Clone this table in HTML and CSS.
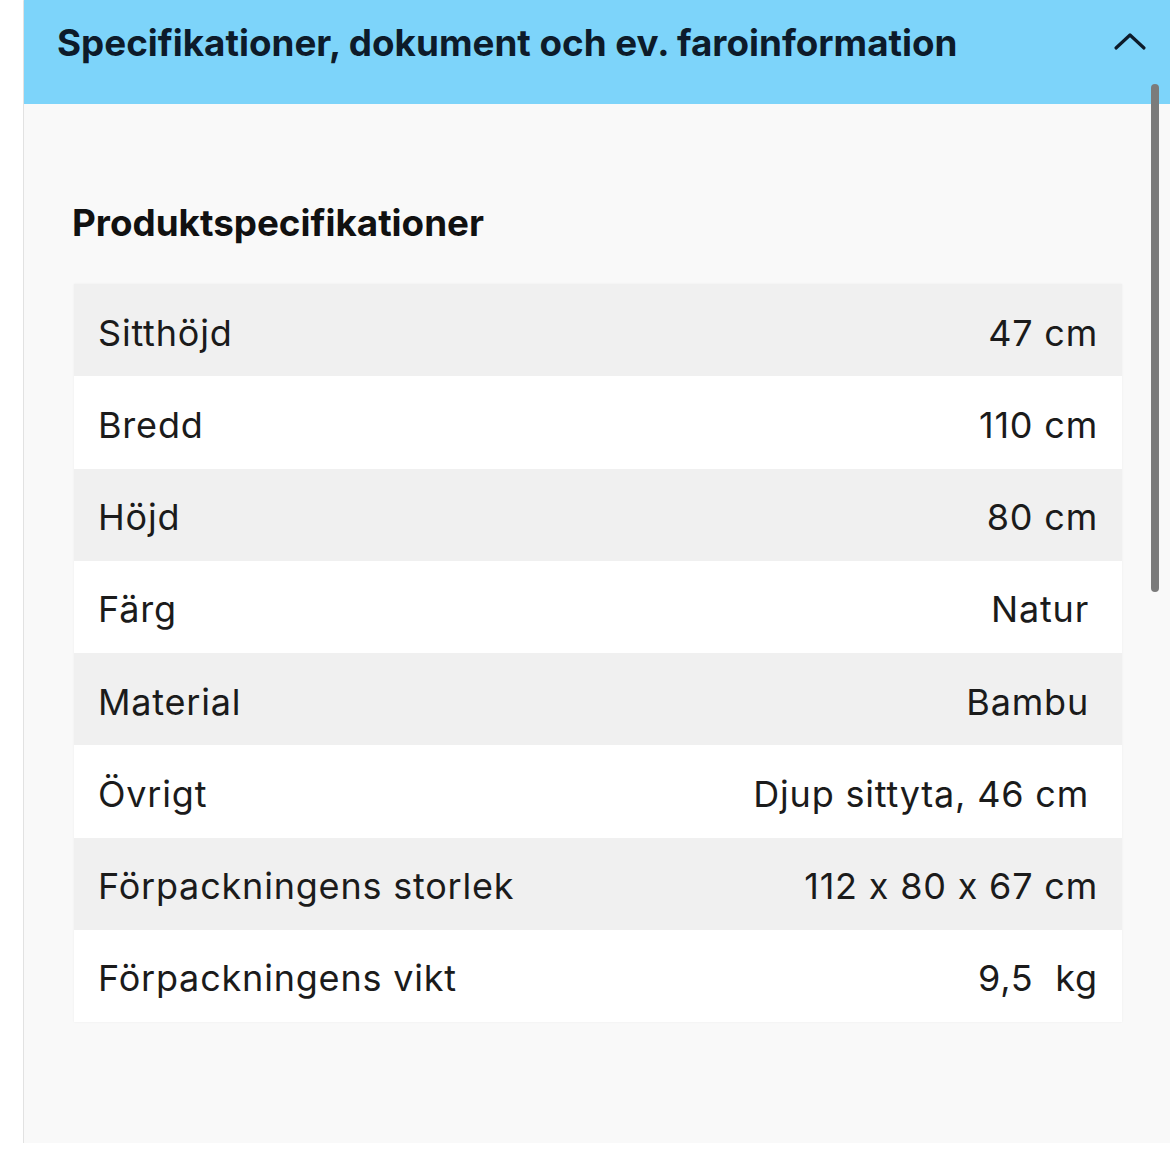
FILE: index.html
```html
<!DOCTYPE html>
<html lang="sv">
<head>
<meta charset="utf-8">
<link rel="stylesheet" href="styles.css">
</head>
<body>
<section class="panel">
  <header class="panel-head">
    <h2 class="panel-title">Specifikationer, dokument och ev. faroinformation</h2>
    <svg class="chevron" width="36" height="24" viewBox="0 0 36 24"><path d="M4 19 L18 6 L32 19" fill="none" stroke="#0d1b2a" stroke-width="3.2" stroke-linecap="round" stroke-linejoin="round"/></svg>
  </header>
  <div class="panel-body">
    <h3 class="spec-title">Produktspecifikationer</h3>
    <div class="spec-table">
      <div class="row"><span>Sitthöjd</span><span>47 cm</span></div>
      <div class="row"><span>Bredd</span><span>110 cm</span></div>
      <div class="row"><span>Höjd</span><span>80 cm</span></div>
      <div class="row"><span>Färg</span><span class="pad">Natur</span></div>
      <div class="row"><span>Material</span><span class="pad">Bambu</span></div>
      <div class="row"><span>Övrigt</span><span class="pad">Djup sittyta, 46 cm</span></div>
      <div class="row"><span>Förpackningens storlek</span><span>112 x 80 x 67 cm</span></div>
      <div class="row"><span>Förpackningens vikt</span><span>9,5&nbsp; kg</span></div>
    </div>
  </div>
  <div class="scrollbar"></div>
</section>
</body>
</html>
```

FILE: styles.css
```css
html, body {
  margin: 0;
  padding: 0;
  background: #ffffff;
}
body {
  font-family: Inter, "Liberation Sans", Arial, sans-serif;
  font-feature-settings: "calt" 0;
  color: #1b1b1b;
}
.panel {
  position: relative;
  margin-left: 24px;
  width: 1146px;
  background: #f9f9f9;
  box-shadow: 0 1px 1px rgba(0,0,0,0.15), -1px 0 0 #e8e8e8;
}
.panel-head {
  height: 104px;
  background: #7dd4fa;
  display: flex;
  align-items: center;
  justify-content: space-between;
  padding: 0 22px 0 33px;
  box-sizing: border-box;
}
.panel-title {
  margin: 0;
  margin-top: -20px;
  font-size: 36.8px;
  font-weight: 700;
  color: #0d1b2a;
}
.chevron {
  margin-top: -22px;
}
.panel-body {
  padding: 100px 48px 121px 50px;
}
.spec-title {
  margin: 0 0 42px -2px;
  font-size: 36.8px;
  font-weight: 700;
  line-height: 38px;
  color: #111;
}
.spec-table {
  display: flex;
  flex-direction: column;
  box-shadow: 0 0 2px rgba(0,0,0,0.06);
}
.row {
  height: 92.25px;
  box-sizing: border-box;
  display: flex;
  align-items: center;
  justify-content: space-between;
  padding: 5px 24px 0;
  font-size: 36px;
  letter-spacing: 0.8px;
  background: #ffffff;
}
.row:nth-child(odd) {
  background: #f0f0f0;
}
.row .pad {
  margin-right: 9px;
}
.scrollbar {
  position: absolute;
  top: 84px;
  left: 1127px;
  width: 8px;
  height: 508px;
  border-radius: 4px;
  background: #7b7b7b;
}
```
